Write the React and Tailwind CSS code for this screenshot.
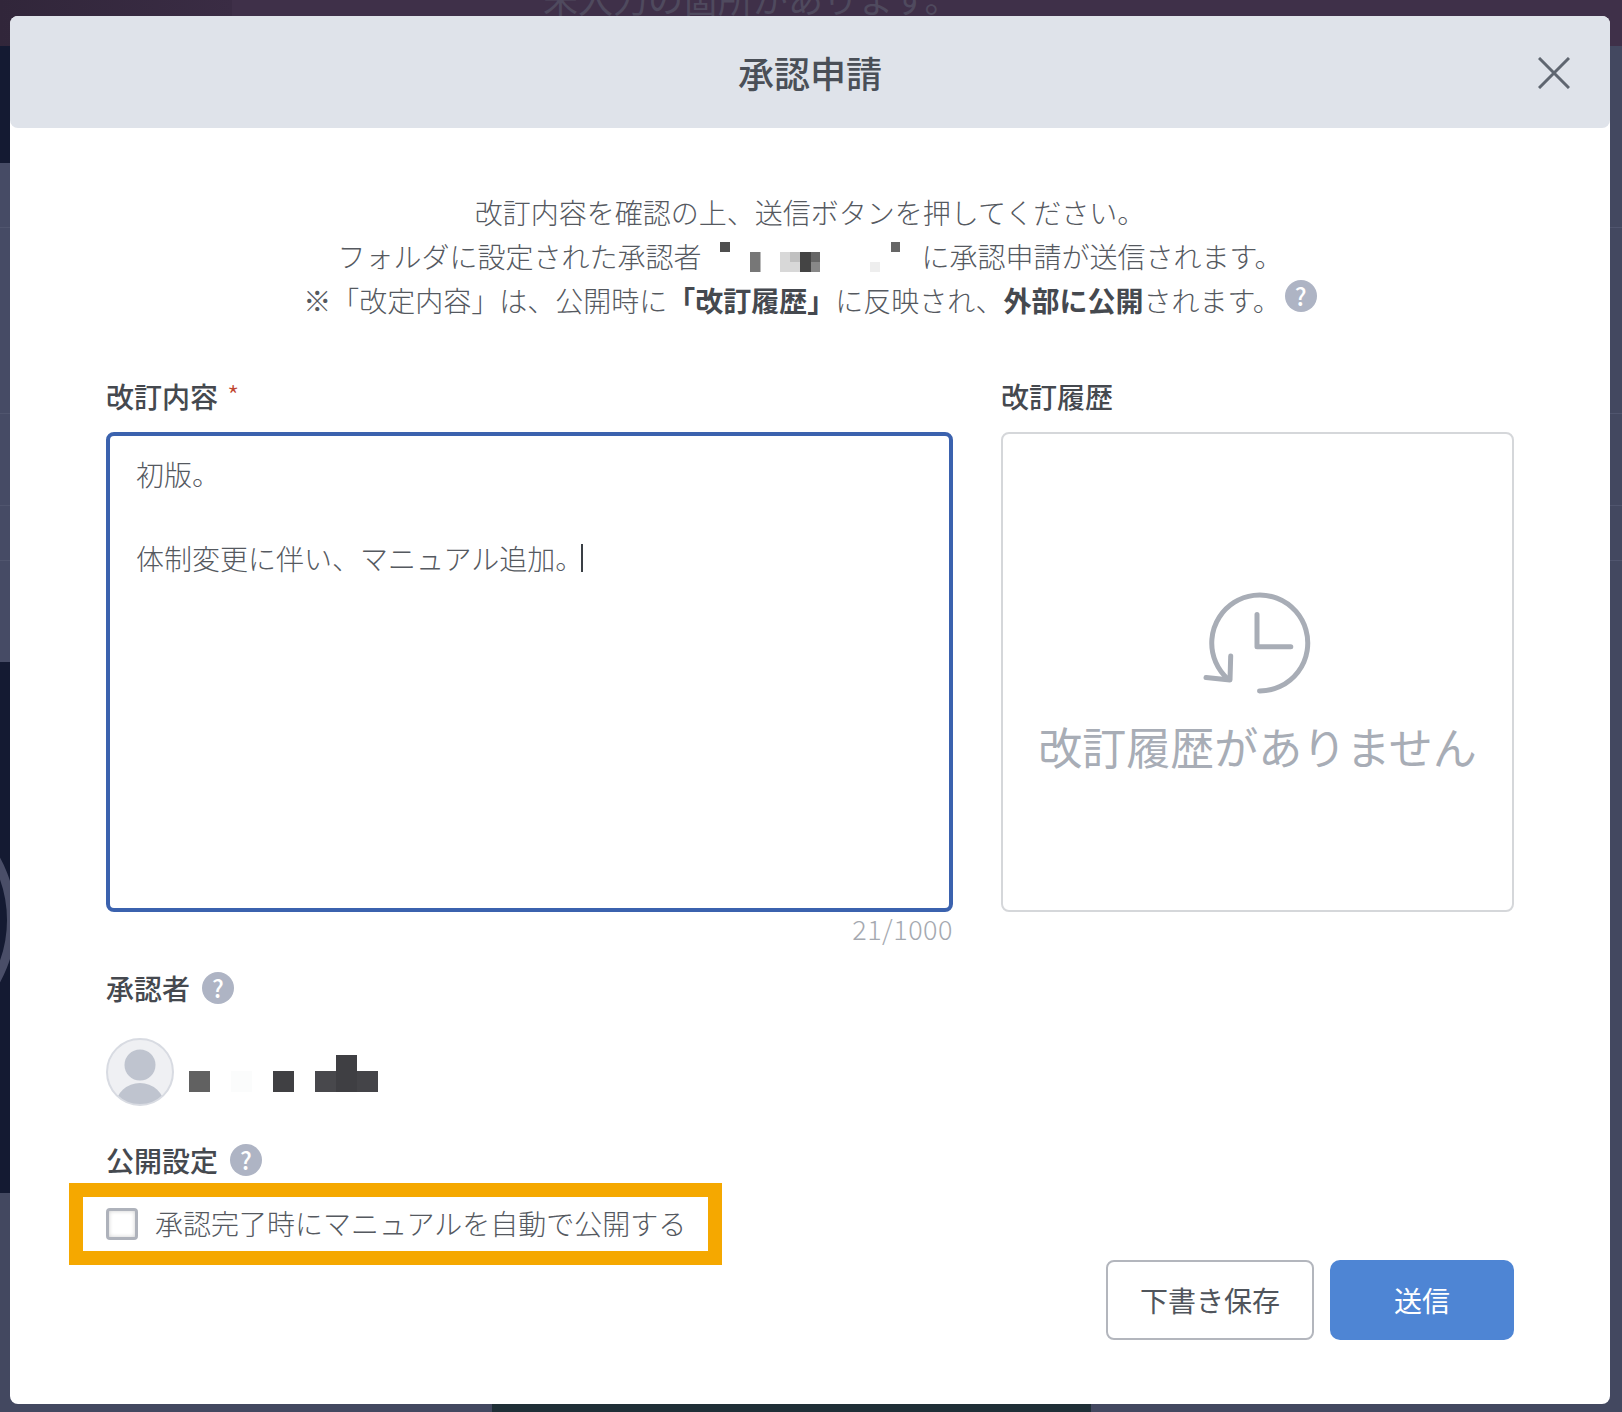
const fontStack = { fontFamily: '"Noto Sans CJK JP", "Noto Sans", sans-serif' };

const Help = ({ className = "" }) => (
  <span
    className={`inline-flex h-8 w-8 shrink-0 items-center justify-center rounded-full bg-[#aeb4c4] text-[24px] font-medium leading-none text-white ${className}`}
  >
    ?
  </span>
);

const Label = ({ children }) => (
  <div className="text-[28px] font-medium leading-[42px] text-[#45494f]">{children}</div>
);

const App = () => {
  return (
    <div
      style={fontStack}
      className="relative h-[1412px] w-full overflow-hidden bg-[#434860] pl-[10px] pr-3 pt-4"
    >
      {/* page behind the dialog */}
      <div className="absolute inset-x-0 top-0 h-[46px] bg-[#3f3049]" />
      <div className="absolute left-0 top-0 h-[46px] w-[232px] bg-gradient-to-r from-[#31263a] to-[#3a2c44]" />
      <div className="absolute left-[543px] top-[-26px] whitespace-nowrap text-[35px] leading-[48px] text-[#4f4a5e]">
        未入力の箇所があります。
      </div>
      <div className="absolute left-0 top-[46px] h-[117px] w-[10px] bg-[#141a32]" />
      <div className="absolute left-0 top-[163px] h-[499px] w-[10px] bg-[#464b65]" />
      <div className="absolute left-0 top-[662px] h-[531px] w-[10px] overflow-hidden bg-[#141a32]">
        <div className="absolute left-[-244px] top-[128px] h-[260px] w-[260px] rounded-full border-[9px] border-[#4a4e68]" />
      </div>
      <div className="absolute left-0 top-[1193px] h-[219px] w-[10px] bg-[#434860]" />
      <div className="absolute inset-x-0 top-[227px] h-px bg-[#50556e]" />
      <div className="absolute inset-x-0 top-[413px] h-px bg-[#50556e]" />
      <div className="absolute inset-x-0 top-[505px] h-px bg-[#50556e]" />
      <div className="absolute inset-x-0 top-[560px] h-px bg-[#50556e]" />
      <div className="absolute bottom-0 left-[492px] h-2 w-[599px] bg-[#1f2f37]" />

      {/* dialog */}
      <div className="relative h-[1388px] rounded-lg bg-white">
        <div className="grid h-28 grid-cols-[1fr_auto_1fr] items-center rounded-lg bg-[#dfe3ea]">
          <div />
          <h1 className="text-[36px] font-medium leading-none text-[#4a4f57]">承認申請</h1>
          <div className="flex justify-end pr-10">
            <svg width="32" height="32" viewBox="0 0 32 32" fill="none" stroke="#5f6670" strokeWidth="3" className="mt-[2px]">
              <path d="M1 1L31 31M31 1L1 31" />
            </svg>
          </div>
        </div>

        <div className="px-24 pb-16">
          <div className="pt-[62px] text-center text-[28px] font-light leading-[44px] text-[#55595f]">
            <p>改訂内容を確認の上、送信ボタンを押してください。</p>
            <p>
              フォルダに設定された承認者
              <svg width="220" height="30" viewBox="0 0 220 30" className="inline-block align-[-4px]">
                <rect x="19" y="0" width="10" height="10" fill="#4f4f4f" />
                <rect x="49" y="10" width="10.5" height="20" fill="#777777" />
                <rect x="79" y="10" width="10" height="20" fill="#d8d8d8" />
                <rect x="89" y="10" width="10" height="10" fill="#c0c0c0" />
                <rect x="89" y="20" width="10" height="10" fill="#d8d8d8" />
                <rect x="99" y="10" width="11" height="20" fill="#444444" />
                <rect x="110" y="10" width="9" height="10" fill="#666666" />
                <rect x="110" y="20" width="9" height="10" fill="#888888" />
                <rect x="169" y="20" width="10" height="10" fill="#eeeeee" />
                <rect x="190" y="0" width="9" height="10" fill="#666666" />
              </svg>
              に承認申請が送信されます。
            </p>
            <p>
              ※「改定内容」は、公開時に
              <b className="font-bold text-[#45494f]">「改訂履歴」</b>
              に反映され、
              <b className="font-bold text-[#45494f]">外部に公開</b>
              されます。
              <Help className="-my-4 ml-1 align-[6px]" />
            </p>
          </div>

          <div className="mt-[53px] grid grid-cols-[847px_513px] gap-x-[48px]">
            <div>
              <div className="flex items-start gap-[9px]">
                <Label>改訂内容</Label>
                <span className="text-[28px] font-light leading-[40px] text-[#c0452f]">*</span>
              </div>
              <div className="mt-[15px] h-[480px] rounded-lg border-4 border-[#3b62ae] px-[26px] pt-[17px] text-[28px] font-light leading-[42px] text-[#55595f]">
                <p>初版。</p>
                <p>&nbsp;</p>
                <p className="flex items-center">
                  体制変更に伴い、マニュアル追加。
                  <span className="-ml-[2px] inline-block h-7 w-[2px] bg-[#3a3f45]" />
                </p>
              </div>
              <div className="text-right text-[27px] font-light leading-[34px] tracking-[0.5px] text-[#a5a9b0]">
                21/1000
              </div>
            </div>
            <div>
              <Label>改訂履歴</Label>
              <div className="mt-[15px] flex h-[480px] flex-col items-center rounded-lg border-2 border-[#d5d7da] pt-[156px]">
                <svg width="116" height="110" viewBox="0 0 116 110" fill="none" stroke="#a8adb6" strokeWidth="5" strokeLinecap="round" strokeLinejoin="round">
                  <path d="M59.5 101A48 48 0 1 0 28 89" />
                  <path d="M30.7 66L30 90L6 87.4" />
                  <path d="M57 24.5V56.7H90.8" />
                </svg>
                <div className="mt-4 text-[44px] leading-[60px] text-[#a8adb6]">
                  改訂履歴がありません
                </div>
              </div>
            </div>
          </div>

          <div className="mt-[21px] flex items-end justify-between">
            <div className="pb-[75px]">
              <div className="flex items-center gap-3">
                <Label>承認者</Label>
                <Help />
              </div>
              <div className="mt-[29px] flex items-center gap-[15px]">
                <svg width="68" height="68" viewBox="0 0 68 68">
                  <defs>
                    <clipPath id="avatarClip">
                      <circle cx="34" cy="34" r="33" />
                    </clipPath>
                  </defs>
                  <circle cx="34" cy="34" r="33" fill="#eff0f3" />
                  <g clipPath="url(#avatarClip)" fill="#bfc4cf">
                    <circle cx="34" cy="27" r="15.5" />
                    <ellipse cx="34" cy="67" rx="24" ry="22" />
                  </g>
                  <circle cx="34" cy="34" r="33" fill="none" stroke="#d8dbe2" strokeWidth="2" />
                </svg>
                <svg width="189" height="37" viewBox="0 0 189 37" className="mt-[2px]">
                  <rect x="0" y="16" width="21" height="21" fill="#616161" />
                  <rect x="42" y="16" width="21" height="21" fill="#fbfcfc" />
                  <rect x="84" y="16" width="21" height="21" fill="#404043" />
                  <rect x="126" y="16" width="21" height="21" fill="#48484c" />
                  <rect x="147" y="0" width="21" height="37" fill="#3f3f43" />
                  <rect x="168" y="16" width="21" height="21" fill="#444448" />
                </svg>
              </div>
              <div className="mt-[33px] flex items-center gap-3">
                <Label>公開設定</Label>
                <Help />
              </div>
              <div className="-ml-[37px] mt-[2px] flex h-[82px] w-[653px] items-center gap-[17px] border-[14px] border-[#f5a800] pl-[23px]">
                <span className="h-8 w-8 shrink-0 rounded border-[3px] border-[#aeb2bb] shadow-[inset_0_0_4px_rgba(0,0,0,0.2)]" />
                <span className="whitespace-nowrap pb-[2px] text-[28px] font-light leading-none text-[#55595f]">
                  承認完了時にマニュアルを自動で公開する
                </span>
              </div>
            </div>
            <div className="flex gap-4">
              <button className="h-20 w-[208px] rounded-lg border-2 border-[#b3b6bd] bg-white text-[28px] text-[#50555c]">
                下書き保存
              </button>
              <button className="h-20 w-[184px] rounded-[10px] bg-[#4e85d4] text-[28px] text-white">
                送信
              </button>
            </div>
          </div>
        </div>
      </div>
    </div>
  );
};

export default App;
